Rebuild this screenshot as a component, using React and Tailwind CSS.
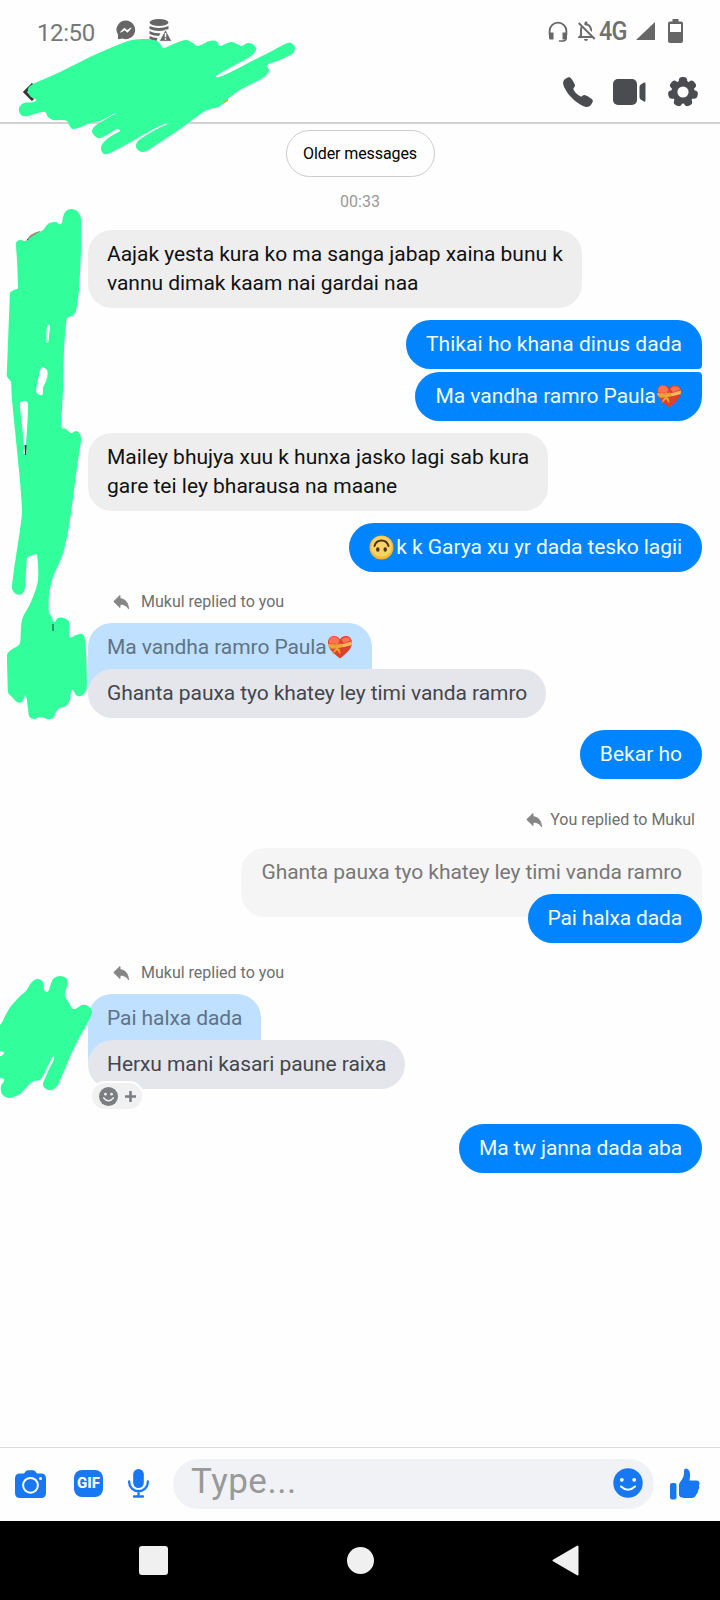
import { IoCall } from "react-icons/io5";
import { MdOutlineNotificationsOff } from "react-icons/md";

const SCRIBBLES = [
  // over the chat title
  "33 84 60 72 90 57 120 44 132 40 147 39 157 41 161 45 163 48 167 47 176 43 186 40 193 43 197 46 203 44 209 41 216 41 220 46 225 44 232 42 239 45 242 46 248 43 254 45 256 50 250 57 235 65 219 74 216 77 222 76 235 70 250 62 270 52 285 44 291 43 295 48 292 54 280 60 267 65 269 71 263 78 240 90 225 101 219 107 205 111 180 129 150 149 142 152 136 147 139 140 155 130 168 123 150 131 131 142 112 152 104 154 101 147 106 140 113 135 120 131 117 129 105 136 98 138 92 132 95 126 106 119 116 113 100 121 90 123 81 127 73 129 69 125 67 121 62 120 53 120 48 117 45 112 38 113 28 116 21 115 19 108 24 103 36 101 30 96 28 89",
  // avatar column, down to the second avatar
  "16 243 20 240 26 241 30 238 36 234 43 230 48 224 55 222 61 224 63 217 66 211 72 209 78 212 81 219 81 250 79 290 76 311 72 316 67 318 65 335 64 350 63 390 61 427 66 429 71 433 76 431 80 434 81 441 76 475 70 520 64 550 58 566 53 577 49 595 49 613 52 617 54 622 58 618 64 618 69 622 70 637 76 635 82 634 85 639 86 650 87 680 86 691 81 696 76 695 72 690 70 700 66 706 60 708 56 712 53 718 48 719 40 717 34 719 29 716 26 696 22 702 17 702 12 697 8 692 7 655 11 650 20 643 22 620 31 602 38 580 37 555 31 556 27 558 25 588 22 594 16 594 12 588 14 570 20 530 22 510 19 470 12 400 11 382 7 376 10 293 14 290 18 288 17 260",
  // last avatar
  "-5 1028 1 1024 9 1009 19 997 26 991 31 983 37 979 43 982 44 989 46 992 49 990 53 979 60 976 67 979 67 986 65 995 69 1003 74 1009 82 1005 88 1006 92 1012 87 1024 74 1048 59 1083 54 1089 48 1090 43 1085 46 1076 50 1067 54 1057 49 1064 41 1079 32 1082 20 1094 9 1098 2 1094 1 1086 4 1079 -5 1077 -5 1060 4 1053 -5 1050",
];

// slivers the marker left uncovered in the avatar column
const GAPS = [
  "20 403 27 402 28 412 26 446 25 454 24 446 22 425",
  "41 368 47 370 47 378 43 388 42 395 36 391",
  "48.5 325 49 336 47.5 343 46.5 338",
];

// Closed smooth curve through the points
function smooth(str) {
  const n = str.split(" ").map(Number);
  const pts = [];
  for (let i = 0; i < n.length; i += 2) pts.push([n[i], n[i + 1]]);
  const at = (i) => pts[(i + pts.length) % pts.length];
  const dist = (a, b) => Math.hypot(a[0] - b[0], a[1] - b[1]);
  const tangent = (i) => {
    const a = at(i - 1), b = at(i + 1);
    const len = dist(a, b) || 1;
    return [(b[0] - a[0]) / len, (b[1] - a[1]) / len];
  };
  let d = `M${pts[0].join(" ")}`;
  pts.forEach((p, i) => {
    const q = at(i + 1);
    const k1 = Math.min(dist(p, q), dist(p, at(i - 1))) / 3;
    const k2 = Math.min(dist(p, q), dist(q, at(i + 2))) / 3;
    const t1 = tangent(i), t2 = tangent(i + 1);
    d += `C${p[0] + t1[0] * k1} ${p[1] + t1[1] * k1} ${q[0] - t2[0] * k2} ${q[1] - t2[1] * k2} ${q[0]} ${q[1]}`;
  });
  return d + "Z";
}

function Scribbles() {
  return (
    <svg className="absolute inset-0 pointer-events-none" width="720" height="1600" viewBox="0 0 720 1600">
      <path d="M26 241q4-8 14-10l2 4-14 13z" fill="#9a8b78" />
      <path d="M27 239l6 1-3 8z" fill="#4a3c34" />
      <path d="M221 103l7-6v4l-5 3z" fill="#e5a13a" />
      {SCRIBBLES.map((s) => <path key={s} d={smooth(s)} fill="#32ff9b" />)}
      {GAPS.map((s) => <path key={s} d={smooth(s)} fill="#fefefe" />)}
      <path d="M24.500 445h2l-.5 10h-1zM52.500 624h1v7h-1z" fill="#333" />
    </svg>
  );
}

function StatusBar() {
  return (
    <div className="flex h-[62px] items-center pl-[37px] pr-[37px] text-[#6b6b6b]">
      <span className="mt-[3px] w-[79px] text-[24px] leading-[28px] tracking-[-0.4px] text-[#777]">12:50</span>
      <svg className="-mt-0.5" width="20" height="20" viewBox="0 0 20 20">
        <path d="M10 .5a9.300 9.300 0 1 1-3.200 18.100L2 19.300v-4.500A9.300 9.300 0 0 1 10 .5z" fill="#666" />
        <path d="M4.600 12.200l3.700-4 2.800 2.300 4.100-2.600-3.600 4.300-2.900-2.300z" fill="#fff" stroke="#fff" strokeLinejoin="round" />
      </svg>
      <svg className="-mt-0.5 ml-3" width="24" height="24" viewBox="0 0 24 24" fill="#666">
        <ellipse cx="11" cy="4.5" rx="9.5" ry="3.5" />
        <path d="M1.500 8q9.500 4 19 0v3q-9.500 4-19 0zM1.500 13q6 3 11 2l-1.500 3q-5 0-9.500-2zM1.500 18q4 2 8 2l-1 3q-4 0-7-2z" />
        <path d="M17.500 11.500l6.300 11.800H11.200z" stroke="#fff" strokeWidth=".8" />
        <path d="M16.700 15h1.600v4.200h-1.600zM16.700 20.300h1.600v1.500h-1.600z" fill="#fff" />
      </svg>

      <div className="ml-auto flex items-center">
        <svg width="20" height="21" viewBox="0 0 20 21" fill="none" stroke="#666">
          <path d="M1.600 14v-4a8.400 8.400 0 0 1 16.800 0v4" strokeWidth="1.800" />
          <path d="M1 11.500h4.500v7H2.500A1.500 1.500 0 0 1 1 17zM14.500 11.500H19v5.500a1.500 1.500 0 0 1-1.500 1.500h-3z" fill="#666" stroke="none" />
          <path d="M18 17q0 3-3 3h-4" strokeWidth="1.600" />
        </svg>
        <MdOutlineNotificationsOff className="ml-[6px] h-[24px] w-[24px]" />
        <span className="ml-px w-[34px] origin-left scale-x-90 text-[26px] font-medium leading-[28px] tracking-[-1px] text-[#707070]">4G</span>
        <svg className="ml-[3px]" width="20" height="18" viewBox="0 0 20 18">
          <path d="M0 18L19 0v18z" fill="#666" />
        </svg>
        <svg className="ml-[12px]" width="15" height="25" viewBox="0 0 15 25">
          <path d="M4.500 0h6v2.500H13a2 2 0 0 1 2 2V22a2 2 0 0 1-2 2H2a2 2 0 0 1-2-2V4.500a2 2 0 0 1 2-2h2.500z" fill="#666" />
          <path d="M2 5h11v8H2z" fill="#fff" />
        </svg>
      </div>
    </div>
  );
}

const TEETH = [0, 1, 2, 3, 4, 5, 6];

function ChatHeader() {
  return (
    <div className="flex h-[60px] items-center pl-[22px] pr-[21px]">
      <svg width="12" height="18" viewBox="0 0 12 18" fill="none" stroke="#333" strokeWidth="3">
        <path d="M11 1L3 9l8 8" />
      </svg>
      <IoCall className="ml-auto h-[34px] w-[34px] text-[#4b4c4f]" />
      <svg className="ml-[18px]" width="33" height="26" viewBox="0 0 33 26" fill="#4b4c4f">
        <rect x="0" y="0" width="24" height="26" rx="5" />
        <path d="M26.500 8q0-1.500 1-2.200l3-2q2-1 2 1v16.500q0 2-2 1l-3-2q-1-.7-1-2.200z" />
      </svg>
      <svg className="ml-[21px]" width="32" height="32" viewBox="-16 -16 32 32">
        <circle r="11.500" fill="#4b4c4f" />
        {TEETH.map((i) => (
          <rect key={i} x="-4.200" y="-15" width="8.400" height="10" rx="3.500" fill="#4b4c4f" transform={`rotate(${(i * 360) / 7})`} />
        ))}
        <circle r="5.600" fill="#fff" />
      </svg>
    </div>
  );
}

function HeartRibbon() {
  return (
    <svg className="inline-block align-[-6px]" width="26" height="26" viewBox="0 0 26 26">
      <path d="M13 24.500C6 19 1 14.500 1 8.500 1 4.500 3.800 2 7.200 2 9.800 2 12 3.500 13 5.500 14 3.500 16.200 2 18.800 2 22.200 2 25 4.500 25 8.500c0 6-5 10.500-12 16z" fill="#df4029" />
      <path d="M2 7C3 1.500 10 1 12.500 6.500L11 10 2 9.500zM14.500 6c2-4 8-3.500 9.500.500l-7 3z" fill="#fb7350" />
      <path d="M1.200 10Q13 12 24.800 7.500V11Q14 15 2 13z" fill="#fbb95c" />
      <path d="M9 12q-5-4-6 0t6 2q-3 3-3 6l4-4 3 4q1-4-2-6 5 0 4-3t-6 1z" fill="#f0a530" stroke="#d08a30" strokeWidth=".6" />
    </svg>
  );
}

function UpsideDownFace() {
  return (
    <svg className="mr-[2px] inline-block align-[-6px]" width="25" height="25" viewBox="0 0 25 25">
      <circle cx="12.500" cy="12.500" r="12" fill="#f6b53d" />
      <circle cx="12.500" cy="11.500" r="10.500" fill="#fdd264" />
      <path d="M5.500 11q1.500-5.500 7-5.500t7 5.500" fill="none" stroke="#4a3416" strokeWidth="2" strokeLinecap="round" />
      <ellipse cx="8.800" cy="14.500" rx="1.700" ry="2.300" fill="#4a3416" />
      <ellipse cx="16.200" cy="14.500" rx="1.700" ry="2.300" fill="#4a3416" />
    </svg>
  );
}

function Bubble({ className, children }) {
  return (
    <div className={`w-fit whitespace-nowrap py-[10.25px] text-[21px] leading-[28.5px] ${className}`}>
      {children}
    </div>
  );
}

function Received({ className = "", children }) {
  return <Bubble className={`rounded-[24px] bg-[#eee] px-[19px] text-[#111] ${className}`}>{children}</Bubble>;
}

function Sent({ className, children }) {
  return <Bubble className={`self-end bg-[#0084ff] px-[20px] text-[#f2fbff] ${className}`}>{children}</Bubble>;
}

function ReplyLabel({ className, children }) {
  return (
    <div className={`flex h-5 items-center text-[16px] leading-5 text-[#6f6f6f] ${className}`}>
      <svg width="16" height="16" viewBox="0 0 16 16" fill="#858585" stroke="#858585" strokeLinejoin="round">
        <path d="M.8 7.500L7 1.500v3.300c5 0 8 3.500 8.500 10-2-3.500-4.500-4.500-8.500-4.500v3.200z" />
      </svg>
      {children}
    </div>
  );
}

// Reply from the other person, stacked over the message it quotes
function QuotedReply({ quote, children }) {
  return (
    <div className="relative mt-[11px] tracking-[-0.08px]">
      <Bubble className="h-[69px] rounded-t-[24px] rounded-b-[4px] bg-[#bfe0ff] px-[19px] text-[#5f7386]">{quote}</Bubble>
      <Bubble className="relative -mt-[23px] rounded-[24.5px] bg-[#e4e6eb] px-[19px] text-[#44464b]">{children}</Bubble>
    </div>
  );
}

function Messages() {
  return (
    <div className="flex flex-1 flex-col items-start pl-[88px] pr-[18px]">
      <button className="-ml-[70px] mt-[6px] h-[47px] w-[149px] self-center rounded-full border border-[#ccc] text-[16px] tracking-[-0.1px] text-black">
        Older messages
      </button>
      <div className="-ml-[70px] mt-[15px] self-center text-[16px] leading-5 text-[#999]">00:33</div>

      <Received className="mt-[18px] tracking-[-0.04px]">
        Aajak yesta kura ko ma sanga jabap xaina bunu k<br />
        vannu dimak kaam nai gardai naa
      </Received>
      <Sent className="mt-[12.5px] rounded-[24.5px] rounded-br-[4px] tracking-[0.04px]">Thikai ho khana dinus dada</Sent>
      <Sent className="mt-[3px] rounded-[24.5px] rounded-tr-[4px] tracking-[-0.04px]">
        Ma vandha ramro Paula<HeartRibbon />
      </Sent>
      <Received className="mt-[12px]">
        Mailey bhujya xuu k hunxa jasko lagi sab kura<br />
        gare tei ley bharausa na maane
      </Received>
      <Sent className="mt-[12.5px] rounded-[24.5px] tracking-[-0.06px]"><UpsideDownFace />k k Garya xu yr dada tesko lagii</Sent>

      <ReplyLabel className="ml-[25px] mt-[20px] gap-[12px]">Mukul replied to you</ReplyLabel>
      <QuotedReply quote={<>Ma vandha ramro Paula<HeartRibbon /></>}>
        Ghanta pauxa tyo khatey ley timi vanda ramro
      </QuotedReply>
      <Sent className="mt-[12px] rounded-[24.5px]">Bekar ho</Sent>

      <ReplyLabel className="mr-[7px] mt-[31px] gap-[8px] self-end">You replied to Mukul</ReplyLabel>
      <Bubble className="mt-[18px] h-[69px] self-end rounded-[24px] rounded-br-[4px] bg-[#f5f5f5] px-[20px] tracking-[-0.07px] text-[#777]">
        Ghanta pauxa tyo khatey ley timi vanda ramro
      </Bubble>
      <Sent className="relative -mt-[23px] rounded-[24.5px] tracking-[-0.15px]">Pai halxa dada</Sent>

      <ReplyLabel className="ml-[25px] mt-[20px] gap-[12px]">Mukul replied to you</ReplyLabel>
      <div className="relative">
        <QuotedReply quote="Pai halxa dada">Herxu mani kasari paune raixa</QuotedReply>
        <div className="absolute left-[2px] top-[98px] flex h-[30px] w-[54px] items-center gap-[7px] rounded-full border-2 border-[#fefefe] bg-[#f1f1f1] pl-[7px]">
          <svg width="19" height="19" viewBox="0 0 20 20">
            <circle cx="10" cy="10" r="10" fill="#7b7d80" />
            <circle cx="6.800" cy="7.500" r="1.400" fill="#f1f1f1" />
            <circle cx="13.200" cy="7.500" r="1.400" fill="#f1f1f1" />
            <path d="M5 11.500q5 6 10 0" fill="none" stroke="#f1f1f1" strokeWidth="1.600" strokeLinecap="round" />
          </svg>
          <svg width="11" height="11" viewBox="0 0 11 11" stroke="#7b7d80" strokeWidth="2.600">
            <path d="M5.500 0v11M0 5.500h11" />
          </svg>
        </div>
      </div>
      <Sent className="mt-[35px] rounded-[24.5px] tracking-[-0.12px]">Ma tw janna dada aba</Sent>
    </div>
  );
}

function Composer() {
  return (
    <div className="flex h-[74px] items-center border-t border-[#dcdcdc] pb-[2px] pl-[15px] pr-[20px]">
      <svg width="31" height="28" viewBox="0 0 31 28">
        <path d="M9 3.500L11 1q.8-.8 2-.8h5q1.200 0 2 .8l2 2.500h4q5 0 5 5V23q0 5-5 5H5q-5 0-5-5V8.500q0-5 5-5z" fill="#1877f2" />
        <circle cx="15.500" cy="15.300" r="7.400" fill="none" stroke="#fff" strokeWidth="2" />
        <circle cx="25.500" cy="8.500" r="1.500" fill="#fff" />
      </svg>
      <span className="ml-[28px] flex h-[27px] w-[29px] items-center justify-center rounded-[8px] bg-[#1877f2] text-[15px] font-extrabold leading-none text-white">
        GIF
      </span>
      <svg className="ml-[25px]" width="21" height="29" viewBox="0 0 21 29">
        <rect x="5.200" y="0" width="10.600" height="19" rx="5.300" fill="#1877f2" />
        <path d="M1.200 12.500v1a9.300 8.700 0 0 0 18.600 0v-1M10.500 22v5M6 27.500h9" fill="none" stroke="#1877f2" strokeWidth="2.300" strokeLinecap="round" />
      </svg>
      <div className="ml-[24px] flex h-[50px] w-[481px] items-center rounded-full bg-[#f0f2f5] pl-[18px] pr-[11px]">
        <span className="-mt-[5px] text-[35px] leading-none tracking-[0.5px] text-[#999]">Type...</span>
        <svg className="-mt-[2px] ml-auto" width="30" height="30" viewBox="0 0 30 30">
          <circle cx="15" cy="15" r="14.700" fill="#1877f2" />
          <circle cx="8.800" cy="11.800" r="1.900" fill="#fff" />
          <circle cx="21.200" cy="11.800" r="1.900" fill="#fff" />
          <path d="M8 18.500q7 6.500 14 0" fill="none" stroke="#fff" strokeWidth="2" strokeLinecap="round" />
        </svg>
      </div>
      <svg className="ml-[16px]" width="30" height="32" viewBox="0 0 30 32" fill="#1877f2">
        <rect x="0" y="15" width="6.500" height="16.500" rx="2" />
        <path d="M9 17.500q0-2 1.500-4 3.500-4 3.500-9V3q0-2.500 2.500-2.500 4 1.500 3.500 8l-.5 4h7q3 0 3 3 0 1-.5 1.800 1 3-.8 5-.2 3-2 4.200-1 3.500-5 3.500H14q-5-.5-5-3.500z" />
      </svg>
    </div>
  );
}

function NavBar() {
  return (
    <div className="flex h-[79px] items-center bg-black pl-[139px]">
      <span className="h-[29px] w-[29px] rounded-[3px] bg-[#f0f0f0]" />
      <span className="ml-[179px] h-[27px] w-[27px] rounded-full bg-[#f0f0f0]" />
      <svg className="ml-[178px]" width="27" height="31" viewBox="0 0 27 31">
        <path d="M25.500 1.500v28L1.500 15.500z" fill="#f0f0f0" stroke="#f0f0f0" strokeWidth="2" strokeLinejoin="round" />
      </svg>
    </div>
  );
}

export default function App() {
  return (
    <div className="relative flex h-[1600px] w-[720px] flex-col overflow-hidden bg-[#fefefe] font-['Roboto',sans-serif]">
      <div className="border-b-2 border-[#d2d2d2]">
        <StatusBar />
        <ChatHeader />
      </div>
      <Messages />
      <Composer />
      <NavBar />
      <Scribbles />
    </div>
  );
}
